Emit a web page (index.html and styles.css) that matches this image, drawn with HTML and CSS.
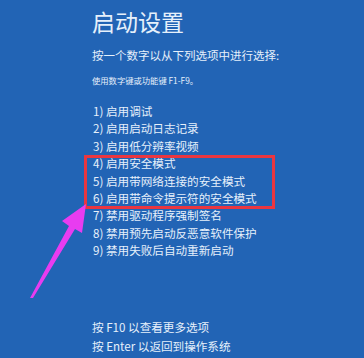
FILE: index.html
```html
<!DOCTYPE html>
<html lang="zh-CN">
<head>
<meta charset="utf-8">
<link rel="stylesheet" href="styles.css">
</head>
<body>
<div class="page">
  <h1 class="title">启动设置</h1>
  <p class="sub">按一个数字以从下列选项中进行选择:</p>
  <p class="hint">使用数字键或功能键 F1-F9。</p>
  <ol class="opts">
    <li>1) 启用调试</li>
    <li>2) 启用启动日志记录</li>
    <li>3) 启用低分辨率视频</li>
    <li>4) 启用安全模式</li>
    <li>5) 启用带网络连接的安全模式</li>
    <li>6) 启用带命令提示符的安全模式</li>
    <li>7) 禁用驱动程序强制签名</li>
    <li>8) 禁用预先启动反恶意软件保护</li>
    <li>9) 禁用失败后自动重新启动</li>
  </ol>
  <div class="foot">
    <p>按 F10 以查看更多选项</p>
    <p>按 Enter 以返回到操作系统</p>
  </div>
  <div class="mark"></div>
  <svg class="arrow" width="364" height="358" viewBox="0 0 364 358">
    <polygon points="86,204 62,221 69,226 30,298 33,298 75,229 82,233" fill="#e83cf0"/>
  </svg>
</div>
</body>
</html>
```
FILE: styles.css
```css
html, body {
  margin: 0;
  padding: 0;
  background: #2264b5;
}
.page {
  position: relative;
  width: 364px;
  height: 358px;
  box-sizing: border-box;
  padding: 8px 0 0 92px;
  font-family: "Noto Sans CJK SC", "Noto Sans", sans-serif;
  color: #e6f0fb;
  overflow: hidden;
}
.title {
  margin: 0;
  font-size: 23px;
  line-height: 26px;
  font-weight: 400;
  letter-spacing: 0;
}
.sub {
  margin: 13px 0 0;
  font-size: 11.5px;
  line-height: 16px;
}
.hint {
  margin: 11px 0 0;
  font-size: 8.3px;
  line-height: 12px;
}
.opts {
  list-style: none;
  margin: 17px 0 0;
  padding: 0 0 0 1px;
  font-size: 11.6px;
  line-height: 17.4px;
}
.foot {
  margin-top: 58px;
  font-size: 11.6px;
  line-height: 19px;
}
.foot p {
  margin: 0;
}
.mark {
  position: absolute;
  left: 84px;
  top: 155px;
  width: 185px;
  height: 48px;
  border: 3.5px solid #ea3640;
}
.arrow {
  position: absolute;
  left: 0;
  top: 0;
}
```
